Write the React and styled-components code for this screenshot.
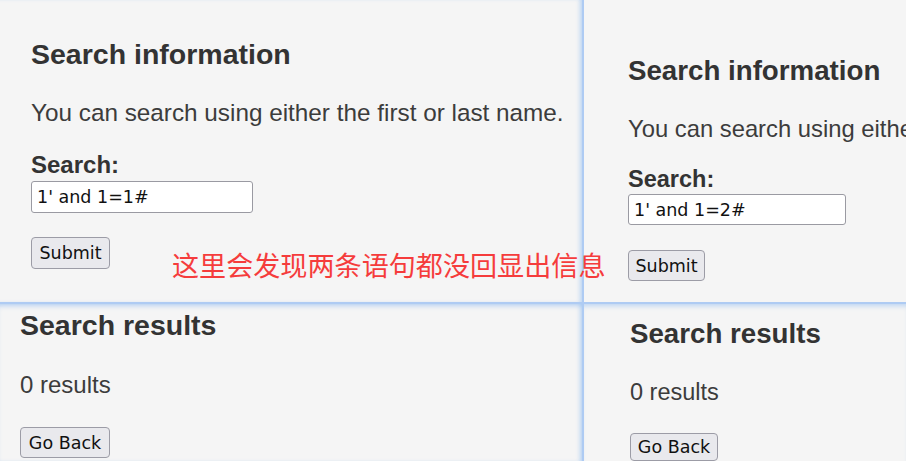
import React from "react";
import styled, { createGlobalStyle } from "styled-components";

const Global = createGlobalStyle`
  html, body { margin: 0; padding: 0; background: #f5f5f5; }
  body { width: 906px; height: 461px; overflow: hidden; }
`;

const Canvas = styled.div`
  position: relative;
  width: 906px;
  height: 461px;
  overflow: hidden;
  display: grid;
  grid-template-columns: 582px 1fr;
  grid-template-rows: 302px 1fr;
  gap: 2px;
  background: #aecbf3;
  font-family: "Liberation Sans", Arial, sans-serif;
  color: #333;
`;

const Pane = styled.section`
  background: #f5f5f5;
  overflow: hidden;
  white-space: nowrap;
  display: flex;
  flex-direction: column;
  align-items: flex-start;
  padding: ${(p) => p.$pad};
  box-shadow: ${(p) => p.$shadow};
`;

const Heading = styled.h2`
  margin: 0;
  font-size: ${(p) => p.$size}px;
  line-height: 32px;
  font-weight: 700;
  color: #333;
`;

const Text = styled.p`
  margin: ${(p) => p.$mt}px 0 0;
  font-size: ${(p) => p.$size}px;
  line-height: 28px;
  color: #3c3c3c;
`;

const Label = styled.label`
  margin-top: ${(p) => p.$mt}px;
  font-size: ${(p) => p.$size}px;
  line-height: 28px;
  font-weight: 700;
  color: #333;
`;

const Field = styled.input`
  box-sizing: border-box;
  margin-top: ${(p) => p.$mt}px;
  width: ${(p) => p.$w}px;
  height: ${(p) => p.$h}px;
  padding: 0 5px;
  border: 1px solid #9a9aa2;
  border-radius: 3px;
  background: #fff;
  font-family: "DejaVu Sans", Tahoma, sans-serif;
  font-size: 17.5px;
  color: #111;
  outline: none;
`;

const Button = styled.button`
  box-sizing: border-box;
  margin-top: ${(p) => p.$mt}px;
  width: ${(p) => p.$w}px;
  height: ${(p) => p.$h}px;
  padding: 0;
  border: 1px solid #9c9ca6;
  border-radius: 4px;
  background: #e9e9ed;
  font-family: "DejaVu Sans", Tahoma, sans-serif;
  font-size: 17.5px;
  color: #111;
`;

const Note = styled.div`
  position: absolute;
  left: 172px;
  top: 251px;
  font-family: "Noto Sans CJK SC", sans-serif;
  font-size: 27.1px;
  line-height: 27px;
  color: #f53c3c;
  white-space: nowrap;
`;

const glowLeft = "inset -4px 0 4px -2px rgba(140,185,240,0.55)";
const glowTop = "inset 0 5px 5px -3px rgba(140,185,240,0.55)";

export default function App() {
  return (
    <>
      <Global />
      <Canvas>
        <Pane $pad="38px 0 0 31px" $shadow={glowLeft}>
          <Heading $size={28.5}>Search information</Heading>
          <Text $size={24.3} $mt={29}>
            You can search using either the first or last name.
          </Text>
          <Label $size={24} $mt={24}>Search:</Label>
          <Field $mt={2} $w={222} $h={32} defaultValue="1' and 1=1#" />
          <Button $mt={24} $w={79} $h={32}>Submit</Button>
        </Pane>
        <Pane $pad="55px 0 0 44px">
          <Heading $size={27.7}>Search information</Heading>
          <Text $size={23.8} $mt={28}>
            You can search using either the first or last name.
          </Text>
          <Label $size={23.5} $mt={22}>Search:</Label>
          <Field $mt={1} $w={218} $h={31} defaultValue="1' and 1=2#" />
          <Button $mt={25} $w={77} $h={31}>Submit</Button>
        </Pane>
        <Pane $pad="5px 0 0 20px" $shadow={`${glowLeft}, ${glowTop}`}>
          <Heading $size={28.5}>Search results</Heading>
          <Text $size={24} $mt={30}>0 results</Text>
          <Button $mt={28} $w={90} $h={31}>Go Back</Button>
        </Pane>
        <Pane $pad="14px 0 0 46px" $shadow={glowTop}>
          <Heading $size={27.7}>Search results</Heading>
          <Text $size={23.5} $mt={28}>0 results</Text>
          <Button $mt={27} $w={88} $h={31}>Go Back</Button>
        </Pane>
        <Note>这里会发现两条语句都没回显出信息</Note>
      </Canvas>
    </>
  );
}
